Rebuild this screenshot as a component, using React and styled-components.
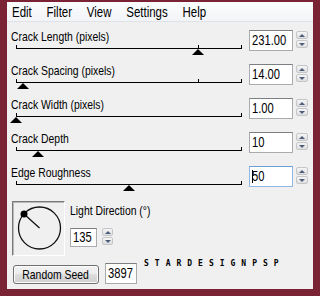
import React from 'react';
import styled, { createGlobalStyle } from 'styled-components';

const GlobalStyle = createGlobalStyle`
  html, body {
    margin: 0;
    padding: 0;
    background: #7a2335;
  }
  body {
    font-family: "Liberation Sans", Arial, sans-serif;
    color: #000;
  }
`;

const Frame = styled.div`
  width: 320px;
  height: 296px;
  box-sizing: border-box;
  padding: 2px 7px 7px 7px;
  background: #7a2335;
`;

const Window = styled.div`
  height: 100%;
  background: #f0f0f0;
  display: flex;
  flex-direction: column;
`;

// the dialog text is condensed, like a Segoe UI dialog squeezed sideways
const Narrow = styled.span`
  display: inline-block;
  white-space: nowrap;
  transform: scaleX(${(p) => p.$scale || 0.8});
  transform-origin: ${(p) => p.$origin || 'left'} center;
`;

const MenuBar = styled.div`
  height: 19px;
  display: flex;
  align-items: center;
  padding-left: 5px;
  background: linear-gradient(#fbfcfd, #f2f4f7);
  border-bottom: 1px solid #dfe3e8;
  font-size: 14px;
`;

const MenuItems = styled(Narrow)`
  display: flex;
  gap: 18px;
`;

const Content = styled.div`
  padding: 7px 5px 0 4px;
  display: flex;
  flex-direction: column;
`;

const SliderRow = styled.div`
  display: grid;
  grid-template-columns: 1fr 44px 15px;
  height: 34px;
`;

const LabelCol = styled.div`
  display: flex;
  flex-direction: column;
`;

const Label = styled.div`
  font-size: 13px;
  line-height: 16px;
  height: 16px;
  white-space: nowrap;
  margin-top: ${(p) => p.$top || 0}px;
`;

const Track = styled.div`
  position: relative;
  margin: 3px 7px 0 5px;
  height: 1px;
  background: #000;
  &::before,
  &::after {
    content: '';
    position: absolute;
    bottom: 0;
    width: 1px;
    height: 4px;
    background: #000;
  }
  &::before {
    left: 0;
  }
  &::after {
    right: 0;
  }
`;

const Tick = styled.span`
  position: absolute;
  bottom: 0;
  width: 1px;
  height: 4px;
  background: #000;
`;

const Thumb = styled.span`
  position: absolute;
  top: 1px;
  transform: translateX(-50%);
  width: 0;
  height: 0;
  border-left: 6px solid transparent;
  border-right: 6px solid transparent;
  border-bottom: 6px solid #000;
`;

const NumberBox = styled.div`
  box-sizing: border-box;
  margin-top: ${(p) => (p.$top === undefined ? 1 : p.$top)}px;
  margin-left: ${(p) => p.$left || 0}px;
  width: ${(p) => p.$width || 44}px;
  height: ${(p) => p.$height || 21}px;
  background: #fff;
  border: 1px solid ${(p) => (p.$focus ? '#8fb8e4' : '#a9abae')};
  border-top-color: ${(p) => (p.$focus ? '#6a9fd8' : '#7c7f84')};
  font-size: 14px;
  line-height: ${(p) => (p.$height || 21) - 2}px;
  padding-left: 2px;
  display: flex;
  align-items: center;
  overflow: hidden;
`;

const Caret = styled.span`
  flex: none;
  width: 1px;
  height: 13px;
  background: #000;
  margin-right: -1px;
`;

const Spinner = styled.div`
  margin: ${(p) => p.$top || 2}px 0 0 ${(p) => p.$left || 3}px;
  width: ${(p) => p.$width || 12}px;
  display: flex;
  flex-direction: column;
  gap: 1px;
`;

const SpinButton = styled.div`
  box-sizing: border-box;
  height: 8px;
  border: 1px solid #c4c6ca;
  border-radius: 2px;
  background: linear-gradient(#f6f6f6, #dedede);
  display: flex;
  align-items: center;
  justify-content: center;
  &::after {
    content: '';
    width: 0;
    height: 0;
    border-left: 3px solid transparent;
    border-right: 3px solid transparent;
    ${(p) => (p.$down ? 'border-top: 3px solid #4e5d7c;' : 'border-bottom: 3px solid #4e5d7c;')}
  }
`;

const LightRow = styled.div`
  display: flex;
  margin-top: 2px;
`;

const DialPanel = styled.div`
  box-sizing: border-box;
  margin-left: 1px;
  width: 53px;
  height: 55px;
  border: 1px solid;
  border-color: #7a7a7a #ffffff #ffffff #7a7a7a;
  box-shadow: inset 1px 1px 0 #b9b9b9;
`;

const LightControls = styled.div`
  margin-left: 5px;
  display: flex;
  flex-direction: column;
`;

const InlineRow = styled.div`
  display: flex;
  align-items: flex-start;
`;

const BottomRow = styled.div`
  display: flex;
  align-items: flex-start;
  margin-top: 7px;
`;

const Button = styled.div`
  box-sizing: border-box;
  margin: 2px 0 0 2px;
  width: 86px;
  height: 19px;
  border: 1px solid #707070;
  border-radius: 3px;
  background: linear-gradient(#f2f2f2, #ebebeb 50%, #dddddd 50%, #cfcfcf);
  box-shadow: inset 0 0 0 1px #fcfcfc;
  font-size: 13px;
  line-height: 17px;
  text-align: center;
`;

const Watermark = styled.div`
  margin: -3px 0 0 7px;
  font-family: "DejaVu Sans Mono", monospace;
  font-size: 8px;
  font-weight: bold;
  line-height: 8px;
  letter-spacing: 6px;
  color: #000;
`;

const sliders = [
  { label: 'Crack Length (pixels)', value: '231.00', pos: 0.805, ticks: [0.805] },
  { label: 'Crack Spacing (pixels)', value: '14.00', pos: 0.031, ticks: [0.805] },
  { label: 'Crack Width (pixels)', value: '1.00', pos: 0, ticks: [] },
  { label: 'Crack Depth', value: '10', pos: 0.097, ticks: [] },
  { label: 'Edge Roughness', value: '50', pos: 0.5, ticks: [], focus: true },
];

const SpinControl = (props) => (
  <Spinner {...props}>
    <SpinButton />
    <SpinButton $down />
  </Spinner>
);

const Dial = () => (
  <svg width="51" height="53" viewBox="0 0 51 53">
    <circle cx="26.5" cy="26" r="21" fill="none" stroke="#111" strokeWidth="1.3" />
    <line x1="11" y1="12" x2="26.5" y2="26" stroke="#111" strokeWidth="1.3" />
    <circle cx="11" cy="12" r="3.5" fill="#000" />
  </svg>
);

export default function App() {
  return (
    <>
      <GlobalStyle />
      <Frame>
        <Window>
          <MenuBar>
            <MenuItems $scale={0.82}>
              {['Edit', 'Filter', 'View', 'Settings', 'Help'].map((m) => (
                <span key={m}>{m}</span>
              ))}
            </MenuItems>
          </MenuBar>
          <Content>
            {sliders.map((s) => (
              <SliderRow key={s.label}>
                <LabelCol>
                  <Label>
                    <Narrow>{s.label}</Narrow>
                  </Label>
                  <Track>
                    {s.ticks.map((t) => (
                      <Tick key={t} style={{ left: `${t * 100}%` }} />
                    ))}
                    <Thumb style={{ left: `${s.pos * 100}%` }} />
                  </Track>
                </LabelCol>
                <NumberBox $focus={s.focus}>
                  {s.focus && <Caret />}
                  <Narrow>{s.value}</Narrow>
                </NumberBox>
                <SpinControl />
              </SliderRow>
            ))}
            <LightRow>
              <DialPanel>
                <Dial />
              </DialPanel>
              <LightControls>
                <Label $top={2}>
                  <Narrow>Light Direction (°)</Narrow>
                </Label>
                <InlineRow>
                  <NumberBox $top={9} $width={27} $height={19}>
                    <Narrow>135</Narrow>
                  </NumberBox>
                  <SpinControl $top={9} $left={5} $width={11} />
                </InlineRow>
              </LightControls>
            </LightRow>
            <BottomRow>
              <Button>
                <Narrow $origin="center">Random Seed</Narrow>
              </Button>
              <NumberBox $top={0} $left={6} $width={32}>
                <Narrow>3897</Narrow>
              </NumberBox>
              <Watermark>STARDESIGNPSP</Watermark>
            </BottomRow>
          </Content>
        </Window>
      </Frame>
    </>
  );
}
